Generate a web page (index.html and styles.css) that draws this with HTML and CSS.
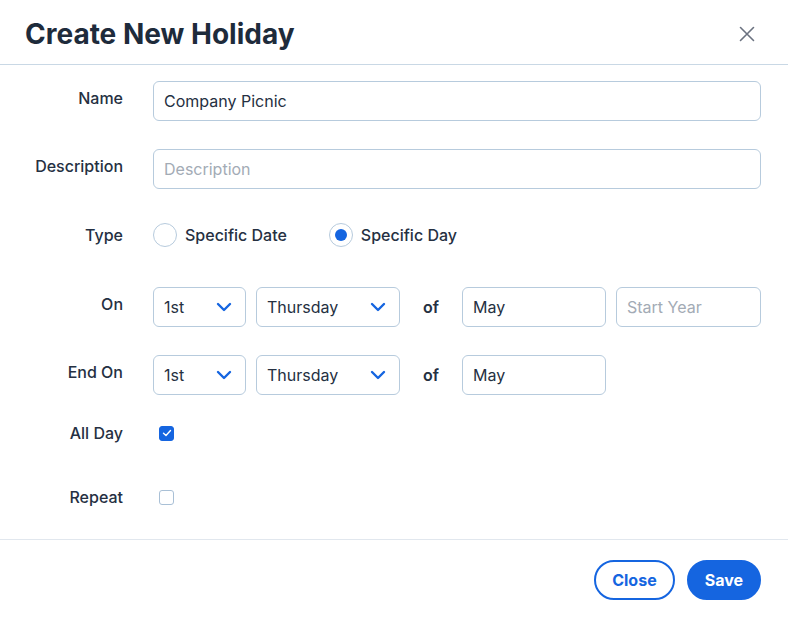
FILE: index.html
```html
<!DOCTYPE html>
<html lang="en">
<head>
    <meta charset="UTF-8">
    <meta name="viewport" content="width=device-width, initial-scale=1.0">
    <title>Create New Holiday</title>
    <link rel="stylesheet" href="styles.css">
</head>
<body>
    <div class="modal">
        <header class="modal-header">
            <h1>Create New Holiday</h1>
            <button class="close-btn" aria-label="Close">
                <svg width="16" height="16" viewBox="0 0 16 16"><path d="M1.5 1.5 L14.5 14.5 M14.5 1.5 L1.5 14.5" stroke="#6b7280" stroke-width="1.6" stroke-linecap="round"/></svg>
            </button>
        </header>

        <form class="form-grid">
            <label class="form-label">Name</label>
            <div class="field"><input class="text-input" type="text" value="Company Picnic"></div>

            <label class="form-label">Description</label>
            <div class="field"><input class="text-input" type="text" placeholder="Description"></div>

            <label class="form-label centered">Type</label>
            <div class="field radios">
                <label class="radio"><span class="radio-dot"></span>Specific Date</label>
                <label class="radio"><span class="radio-dot checked"></span>Specific Day</label>
            </div>

            <label class="form-label">On</label>
            <div class="field date-row">
                <div class="select sel-small"><span>1st</span>
                    <svg width="16" height="10" viewBox="0 0 16 10"><path d="M2 2 L8 8 L14 2" fill="none" stroke="#1565e0" stroke-width="2.4" stroke-linecap="round" stroke-linejoin="round"/></svg>
                </div>
                <div class="select sel-wide"><span>Thursday</span>
                    <svg width="16" height="10" viewBox="0 0 16 10"><path d="M2 2 L8 8 L14 2" fill="none" stroke="#1565e0" stroke-width="2.4" stroke-linecap="round" stroke-linejoin="round"/></svg>
                </div>
                <span class="of">of</span>
                <input class="text-input month" type="text" value="May">
                <input class="text-input year" type="text" placeholder="Start Year">
            </div>

            <label class="form-label">End On</label>
            <div class="field date-row">
                <div class="select sel-small"><span>1st</span>
                    <svg width="16" height="10" viewBox="0 0 16 10"><path d="M2 2 L8 8 L14 2" fill="none" stroke="#1565e0" stroke-width="2.4" stroke-linecap="round" stroke-linejoin="round"/></svg>
                </div>
                <div class="select sel-wide"><span>Thursday</span>
                    <svg width="16" height="10" viewBox="0 0 16 10"><path d="M2 2 L8 8 L14 2" fill="none" stroke="#1565e0" stroke-width="2.4" stroke-linecap="round" stroke-linejoin="round"/></svg>
                </div>
                <span class="of">of</span>
                <input class="text-input month" type="text" value="May">
            </div>

            <label class="form-label centered">All Day</label>
            <div class="field check-field">
                <span class="checkbox checked">
                    <svg width="10" height="8" viewBox="0 0 10 8"><path d="M1.5 4.2 L4 6.5 L8.5 1.5" fill="none" stroke="#fff" stroke-width="1.4" stroke-linecap="round" stroke-linejoin="round"/></svg>
                </span>
            </div>

            <label class="form-label centered">Repeat</label>
            <div class="field check-field">
                <span class="checkbox"></span>
            </div>
        </form>

        <footer class="modal-footer">
            <button class="btn btn-outline">Close</button>
            <button class="btn btn-primary">Save</button>
        </footer>
    </div>
</body>
</html>
```

FILE: styles.css
```css
body {
    margin: 0;
    font-family: 'Inter', 'Noto Sans', sans-serif;
    background: #ffffff;
    color: #253042;
}
.modal {
    width: 788px;
    height: 619px;
    background: white;
}
.modal-header {
    height: 65px;
    border-bottom: 1px solid #c9d8e5;
    display: flex;
    align-items: center;
    justify-content: space-between;
    padding: 4px 33px 0 25px;
    box-sizing: border-box;
}
.modal-header h1 {
    margin: 0;
    font-size: 28px;
    font-weight: 700;
    color: #1e2b3b;
}
.close-btn {
    background: none;
    border: none;
    padding: 0;
    cursor: pointer;
    display: flex;
}
.form-grid {
    display: grid;
    grid-template-columns: 98px 1fr;
    grid-template-rows: 68px 66px 72px 68px 58px 64px 62px;
    column-gap: 30px;
    padding: 16px 27px 0 25px;
}
.form-label {
    text-align: right;
    font-size: 16px;
    font-weight: 500;
    line-height: 35px;
    color: #253042;
}
.form-label.centered {
    line-height: 41px;
}
.field {
    display: flex;
    align-items: center;
    height: 40px;
}
.text-input {
    width: 100%;
    height: 40px;
    box-sizing: border-box;
    border: 1px solid #b7cbdd;
    border-radius: 6px;
    padding: 0 10px;
    font-family: inherit;
    font-size: 16px;
    color: #253042;
    outline: none;
}
.text-input::placeholder {
    color: #a3abb5;
}
.radios {
    gap: 42px;
}
.radio {
    display: flex;
    align-items: center;
    gap: 8px;
    font-size: 16px;
    font-weight: 500;
    color: #253042;
}
.radio-dot {
    width: 24px;
    height: 24px;
    box-sizing: border-box;
    border: 1px solid #b7cbdd;
    border-radius: 50%;
    display: flex;
    align-items: center;
    justify-content: center;
}
.radio-dot.checked::after {
    content: "";
    width: 12px;
    height: 12px;
    border-radius: 50%;
    background: #1565e0;
}
.date-row {
    gap: 10px;
}
.select {
    height: 40px;
    box-sizing: border-box;
    border: 1px solid #b7cbdd;
    border-radius: 6px;
    padding: 0 13px 0 10px;
    display: flex;
    align-items: center;
    justify-content: space-between;
    font-size: 16px;
    color: #253042;
    flex: none;
}
.sel-small {
    width: 93px;
}
.sel-wide {
    width: 144px;
}
.of {
    width: 42px;
    text-align: center;
    font-size: 16px;
    font-weight: 600;
    color: #253042;
    flex: none;
}
.month {
    width: 144px;
    flex: none;
}
.year {
    flex: 1;
}
.check-field {
    padding-left: 6px;
}
.checkbox {
    width: 15px;
    height: 15px;
    box-sizing: border-box;
    border: 1px solid #a9c0d6;
    border-radius: 3px;
    display: flex;
    align-items: center;
    justify-content: center;
}
.checkbox.checked {
    background: #1565e0;
    border-color: #1565e0;
}
.modal-footer {
    border-top: 1px solid #e1e7ee;
    display: flex;
    justify-content: flex-end;
    gap: 12px;
    padding: 20px 27px 0 0;
}
.btn {
    height: 40px;
    border-radius: 20px;
    padding: 0 16px;
    font-family: inherit;
    font-size: 16px;
    font-weight: 700;
    cursor: pointer;
}
.btn-outline {
    background: white;
    color: #1565e0;
    border: 2px solid #1565e0;
}
.btn-primary {
    background: #1565e0;
    color: white;
    border: 2px solid #1565e0;
}
```
